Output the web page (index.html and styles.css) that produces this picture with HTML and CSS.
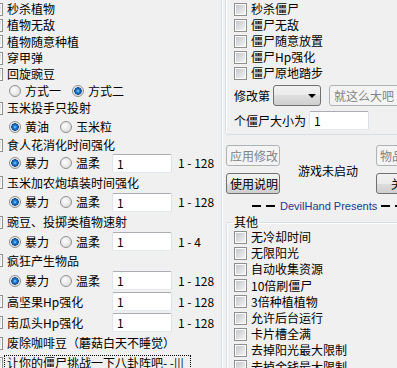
FILE: index.html
```html
<!DOCTYPE html>
<html lang="zh-CN">
<head>
<meta charset="UTF-8">
<title>植物大战僵尸 修改器</title>
<link rel="stylesheet" href="styles.css">
</head>
<body>
<div class="window">
    <div class="plants">
        <label class="check"><input type="checkbox" checked>秒杀植物</label>
        <label class="check"><input type="checkbox">植物无敌</label>
        <label class="check"><input type="checkbox">植物随意种植</label>
        <label class="check"><input type="checkbox">穿甲弹</label>
        <label class="check"><input type="checkbox">回旋豌豆</label>
        <div class="options">
            <label class="radio"><input type="radio" name="pea">方式一</label>
            <label class="radio"><input type="radio" name="pea" checked>方式二</label>
        </div>
        <label class="check"><input type="checkbox">玉米投手只投射</label>
        <div class="options">
            <label class="radio"><input type="radio" name="corn" checked>黄油</label>
            <label class="radio"><input type="radio" name="corn">玉米粒</label>
        </div>
        <label class="check"><input type="checkbox">食人花消化时间强化</label>
        <div class="field">
            <div class="options lead">
                <label class="radio"><input type="radio" name="chomper" checked>暴力</label>
                <label class="radio"><input type="radio" name="chomper">温柔</label>
            </div>
            <input class="num" type="text" value="1"><span class="range">1 - 128</span>
        </div>
        <label class="check"><input type="checkbox">玉米加农炮填装时间强化</label>
        <div class="field">
            <div class="options lead">
                <label class="radio"><input type="radio" name="cob" checked>暴力</label>
                <label class="radio"><input type="radio" name="cob">温柔</label>
            </div>
            <input class="num" type="text" value="1"><span class="range">1 - 128</span>
        </div>
        <label class="check"><input type="checkbox">豌豆、投掷类植物速射</label>
        <div class="field">
            <div class="options lead">
                <label class="radio"><input type="radio" name="rapid" checked>暴力</label>
                <label class="radio"><input type="radio" name="rapid">温柔</label>
            </div>
            <input class="num" type="text" value="1"><span class="range">1 - 4</span>
        </div>
        <label class="check"><input type="checkbox">疯狂产生物品</label>
        <div class="field">
            <div class="options lead">
                <label class="radio"><input type="radio" name="items" checked>暴力</label>
                <label class="radio"><input type="radio" name="items">温柔</label>
            </div>
            <input class="num" type="text" value="1"><span class="range">1 - 128</span>
        </div>
        <div class="field">
            <label class="check lead"><input type="checkbox">高坚果Hp强化</label>
            <input class="num" type="text" value="1"><span class="range">1 - 128</span>
        </div>
        <div class="field">
            <label class="check lead"><input type="checkbox">南瓜头Hp强化</label>
            <input class="num" type="text" value="1"><span class="range">1 - 128</span>
        </div>
        <label class="check"><input type="checkbox">废除咖啡豆（蘑菇白天不睡觉）</label>
        <label class="check"><input type="checkbox" checked><span class="focus">让你的僵尸挑战一下八卦阵吧- -|||</span></label>
    </div>

    <div class="side">
        <div class="group zombies">
            <label class="check"><input type="checkbox">秒杀僵尸</label>
            <label class="check"><input type="checkbox">僵尸无敌</label>
            <label class="check"><input type="checkbox">僵尸随意放置</label>
            <label class="check"><input type="checkbox">僵尸Hp强化</label>
            <label class="check"><input type="checkbox">僵尸原地踏步</label>
            <div class="size-row">
                <span>修改第</span>
                <span class="combo"><span class="arrow"></span></span>
                <button class="btn" disabled>就这么大吧</button>
            </div>
            <div class="size-row">
                <span>个僵尸大小为</span>
                <input class="num" type="text" value="1">
            </div>
        </div>

        <div class="actions">
            <div class="buttons">
                <button class="btn" disabled>应用修改</button>
                <button class="btn">使用说明</button>
            </div>
            <div class="status">游戏未启动</div>
            <div class="buttons">
                <button class="btn" disabled>物品修改</button>
                <button class="btn">关于</button>
            </div>
        </div>

        <div class="credits">
            <span class="dash"></span><span class="dash"></span>
            <span class="name">DevilHand Presents</span>
            <span class="dash"></span><span class="dash"></span>
        </div>

        <fieldset class="other">
            <legend>其他</legend>
            <label class="check"><input type="checkbox">无冷却时间</label>
            <label class="check"><input type="checkbox">无限阳光</label>
            <label class="check"><input type="checkbox">自动收集资源</label>
            <label class="check"><input type="checkbox">10倍刷僵尸</label>
            <label class="check"><input type="checkbox">3倍种植植物</label>
            <label class="check"><input type="checkbox">允许后台运行</label>
            <label class="check"><input type="checkbox">卡片槽全满</label>
            <label class="check"><input type="checkbox">去掉阳光最大限制</label>
            <label class="check"><input type="checkbox">去掉金钱最大限制</label>
        </fieldset>
    </div>
</div>
</body>
</html>
```

FILE: styles.css
```css
* {
    box-sizing: border-box;
}

body {
    margin: 0;
    height: 368px;
    overflow: hidden;
    background: #f0f0f0;
    color: #000;
    font-family: "Noto Sans CJK SC", sans-serif;
    font-size: 12px;
    line-height: 14px;
}

.window {
    display: flex;
    width: 440px;
}

/* left column, cut off by the capture on its left edge */
.plants {
    display: grid;
    grid-template-rows: 16px 16px 17px 16px 16px 17px 18px 20px 16px 20px 19px 20px 20px 19px 19px 21px 21px 21px 20px 20px;
    align-items: center;
    margin-left: -10px;
    padding-top: 1px;
    width: 231px;
    flex: none;
}

.check {
    display: flex;
    align-items: center;
    gap: 4px;
    white-space: nowrap;
}

.check input {
    appearance: none;
    margin: 0;
    padding: 1px;
    border: 1px solid #8e8f8f;
    width: 13px;
    height: 13px;
    flex: none;
    background: linear-gradient(135deg, #c3c7cc, #f3f3f3) content-box, #fdfdfd;
}

.options {
    display: flex;
    align-items: center;
    gap: 11px;
    padding-left: 19px;
}

.radio {
    display: flex;
    align-items: center;
    gap: 4px;
    white-space: nowrap;
}

.radio input {
    appearance: none;
    margin: 0;
    border: 1px solid #8e8f8f;
    border-radius: 50%;
    width: 12px;
    height: 12px;
    flex: none;
    background: radial-gradient(circle at 40% 40%, #fff, #d2d2d2);
}

.radio input:checked {
    background:
        radial-gradient(circle at 50% 50%, #8fd2ff 0, #2a86d2 1.5px, #0b4793 3.5px, rgba(255,255,255,0) 4px),
        radial-gradient(circle at 40% 40%, #fff, #d6d6d6);
}

.field {
    display: flex;
    align-items: center;
}

.field .lead {
    width: 122px;
    flex: none;
}

.num {
    margin: 0;
    padding: 0 4px;
    border: 1px solid;
    border-color: #abadb3 #dbdfe6 #e3e9ef #e2e3ea;
    border-radius: 2px;
    width: 60px;
    height: 19px;
    background: #fff;
    font: inherit;
    color: #000;
    outline: none;
}

.range {
    margin-left: 6px;
    white-space: nowrap;
}

.focus {
    margin-left: -2px;
    padding: 0 6px 0 2px;
    outline: 1px dotted #000;
}

/* right column */
.side {
    width: 209px;
    flex: none;
    border-left: 1px solid #d5dfe5;
    box-shadow: inset 1px 0 #fff;
}

.group {
    margin: -10px 0 0 3px;
    padding: 10px 0 3px 8px;
    border: 1px solid #d5dfe5;
    border-radius: 3px;
    box-shadow: inset 1px 1px #fff;
}

.zombies .check {
    height: 16px;
}

.size-row {
    display: flex;
    align-items: center;
    margin-top: 4px;
    height: 21px;
    white-space: nowrap;
}

.size-row .num {
    margin-left: 3px;
}

.combo {
    display: flex;
    align-items: center;
    justify-content: flex-end;
    margin: 0 8px 0 3px;
    padding-right: 4px;
    border: 1px solid #707070;
    border-radius: 3px;
    width: 48px;
    height: 21px;
    background: linear-gradient(#f2f2f2, #ebebeb 50%, #dddddd 50%, #cfcfcf);
}

.arrow {
    border: 4px solid transparent;
    border-top: 4px solid #000;
    border-bottom: none;
    width: 0;
    height: 0;
}

.btn {
    margin: 0;
    padding: 0 3px;
    border: 1px solid #707070;
    border-radius: 3px;
    width: 54px;
    height: 21px;
    background: linear-gradient(#f2f2f2, #ebebeb 50%, #dddddd 50%, #cfcfcf);
    color: #000;
    font: inherit;
    white-space: nowrap;
    text-align: center;
}

.btn:disabled {
    border-color: #adb2b5;
    background: #f4f4f4;
    color: #838383;
}

.size-row .btn {
    width: 74px;
    padding-left: 4px;
    text-align: left;
}

.actions {
    display: flex;
    align-items: center;
    margin: 10px 0 0 4px;
}

.buttons {
    display: flex;
    flex-direction: column;
    gap: 7px;
}

.status {
    width: 99px;
    padding-top: 3px;
    text-align: center;
}

.credits {
    display: flex;
    align-items: center;
    margin-top: 5px;
    padding-left: 30px;
    height: 14px;
    white-space: nowrap;
}

.dash {
    margin-right: 5px;
    width: 9px;
    height: 2px;
    flex: none;
    background: #000;
}

.name {
    margin-right: 4px;
    color: #1c3a8c;
    font-family: "Liberation Sans", sans-serif;
    font-size: 11px;
    flex: none;
}

.other {
    margin: 2px 0 0 4px;
    padding: 0 0 0 7px;
    border: 1px solid #d5dfe5;
    border-radius: 3px;
    box-shadow: inset 1px 1px #fff;
}

.other legend {
    margin-left: -2px;
    padding: 0 2px;
    line-height: 14px;
}

.other .check {
    height: 16.2px;
}
```
